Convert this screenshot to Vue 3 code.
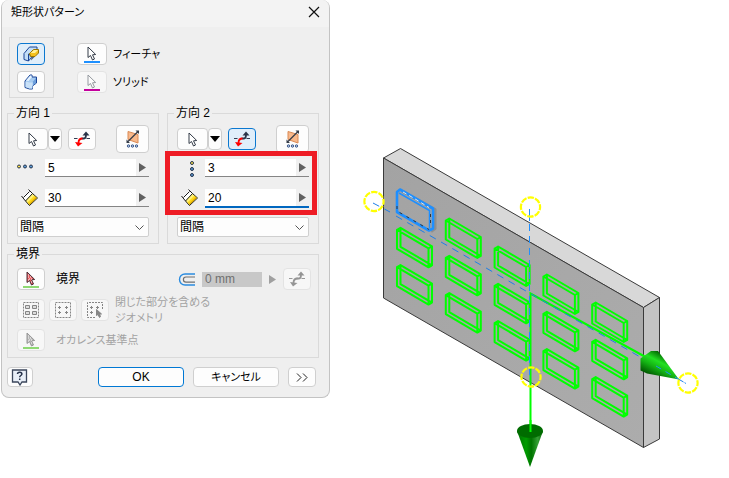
<script setup>
/**
 * 矩形状パターン ダイアログ + モデルビュー
 */
import { reactive, ref } from 'vue'

const target = ref('feature')

const directions = reactive([
  { id: 1, title: '方向 1', count: '5', spacing: '30', mode: '間隔', flipped: false, marked: false },
  { id: 2, title: '方向 2', count: '3', spacing: '20', mode: '間隔', flipped: true, marked: true }
])

const modes = ['間隔', '距離']
const offset = ref('0 mm')

// 左上のセルは元フィーチャなので除く
const pockets = []
for (let row = 0; row < 3; row++) {
  for (let col = 0; col < 5; col++) {
    if (row || col) pockets.push({ x: 397 + col * 48.8, y: 191.5 + col * 28 + row * 37.3 })
  }
}

const handles = [
  { x: 374, y: 201.5 },
  { x: 530.5, y: 207 },
  { x: 531, y: 377 },
  { x: 688, y: 383 }
]
</script>

<template>
  <svg class="defs" aria-hidden="true">
    <symbol id="cursor" viewBox="0 0 10 15">
      <path d="M1 1v10.5l2.5-2 2 4.5 2-1-2-4.2 3.2-.3z" fill="#fff" stroke="#343c48" />
    </symbol>
    <symbol id="cursor-red" viewBox="0 0 10 15">
      <path d="M1 1v10.5l2.5-2 2 4.5 2-1-2-4.2 3.2-.3z" fill="#e8585c" stroke="#4a3038" />
      <path d="M2 4h1M2 6h1M4 6h1M3 8h1M5 8h1M2 9h1M5 11h1" stroke="#fff" />
    </symbol>
    <symbol id="flip" viewBox="0 0 16 16">
      <path d="M0 7.500h3.500M12.500 7.500H16" stroke="#343c50" />
      <path d="M7.500 7.500h2.500c1.500 0 2-1.500 2-4" fill="none" stroke="#2a3448" stroke-width="1.800" />
      <path d="M8.500 4.500L12 .5l3.500 4z" fill="#2a3448" />
      <path d="M8.500 7.500C5.500 7.500 4.500 9 4.500 12" fill="none" stroke="#f00" stroke-width="1.800" />
      <path d="M1 11l3 4.500L8.500 12z" fill="#f00" />
    </symbol>
    <symbol id="midplane" viewBox="0 0 14 18">
      <path d="M2 1.500l10 3v8.500L2 9.500z" fill="#f8b98c" stroke="#d98a55" />
      <path d="M2 11.500L12 1.500" stroke="#343c48" stroke-width="1.200" />
      <path d="M.5 13V9.500L4 13zM13 .5V4L9.500.5z" fill="#343c48" />
      <g fill="#b9d0ee" stroke="#3a5688">
        <circle cx="2.500" cy="16" r="1.200" />
        <circle cx="6.500" cy="16" r="1.200" />
        <circle cx="10.500" cy="16" r="1.200" />
      </g>
    </symbol>
    <symbol id="spacing" viewBox="0 0 18 18">
      <path d="M1.500 8.500l7-7 3 3-7.500 7.500z" fill="#fff" />
      <path d="M4.500 12l7-7.500 5 4.500-8 7.500z" fill="#fff27a" stroke="#1a1a1a" />
      <path d="M6.500 13.500l7-7L15.500 9l-7 6.800z" fill="#ffd91a" />
      <path d="M8 15l7-7 .8 1-7.300 6.800z" fill="#d9a400" />
      <path d="M.5 7l4 5M7.500.5l4 4M2.500 8.500l6-6" fill="none" stroke="#1a1a1a" />
    </symbol>
  </svg>

  <main class="workspace">
    <form class="dialog" @submit.prevent>
      <header class="title-bar">
        <h1>矩形状パターン</h1>
        <button type="button" class="close" aria-label="閉じる">
          <svg width="12" height="12" viewBox="0 0 12 12"><path d="M1 1l10 10M11 1L1 11" stroke="#111" stroke-width="1.200" /></svg>
        </button>
      </header>

      <div class="body">
        <div class="top">
          <div class="kinds">
            <button type="button" class="tool" :class="{ active: target === 'feature' }" aria-label="個別フィーチャ" @click="target = 'feature'">
              <svg width="18" height="18" viewBox="0 0 18 18">
                <path d="M2 8.500L7.500 2h7.500v3L6.500 9.500V16L2 14.500z" fill="#c3def6" stroke="#1b4597" />
                <path d="M6.500 9l3 2v1.500L6.500 16z" fill="#a9cdf0" stroke="#1b4597" />
                <path d="M9.500 11.500h3.500L9 15.500z" fill="#53657e" />
                <path d="M7.500 8.500l4-4h5v3.500l-3.500 3.500H8.500z" fill="#f5c11c" stroke="#9a7400" />
                <path d="M8.500 8l3.500-3h4l-3 3z" fill="#fff19a" />
              </svg>
            </button>
            <button type="button" class="tool" :class="{ active: target === 'solid' }" aria-label="ソリッド全体" @click="target = 'solid'">
              <svg width="18" height="18" viewBox="0 0 18 18">
                <path d="M3 8l5-6h2v2h4.500v6L10.500 13v3H7.500L3 14.500z" fill="#a5caf0" stroke="#1b4597" />
                <path d="M3.500 8.500l4 1h3v6h-3l-4-1.500z" fill="#c9e1f8" />
                <path d="M4 7.500l4.500-5h1v2L6.500 8z" fill="#e6f3ff" />
                <path d="M11 8.500l3-3.500v5l-3 2.500z" fill="#6d9fdb" />
              </svg>
            </button>
          </div>
          <div class="picks">
            <div class="pick">
              <button id="pick-feature" type="button" class="tool pick-button">
                <svg width="10" height="15"><use href="#cursor" /></svg>
                <i class="underline blue"></i>
              </button>
              <label class="kana" for="pick-feature">フィーチャ</label>
            </div>
            <div class="pick">
              <button id="pick-solid" type="button" class="tool pick-button" disabled>
                <svg class="faded" width="10" height="15"><use href="#cursor" /></svg>
                <i class="underline magenta"></i>
              </button>
              <label class="kana" for="pick-solid">ソリッド</label>
            </div>
          </div>
        </div>

        <div class="directions">
          <fieldset v-for="dir in directions" :key="dir.id" class="group">
            <legend>{{ dir.title }}</legend>
            <div class="tools">
              <button type="button" class="tool path" aria-label="パスを選択">
                <svg width="10" height="15"><use href="#cursor" /></svg>
              </button>
              <button type="button" class="tool drop" aria-label="選択オプション">
                <svg width="10" height="6" viewBox="0 0 10 6"><path d="M0 0h10L5 6z" fill="#000" /></svg>
              </button>
              <button type="button" class="tool flip" :class="{ active: dir.flipped }" aria-label="反転" @click="dir.flipped = !dir.flipped">
                <svg width="16" height="16"><use href="#flip" /></svg>
              </button>
              <button type="button" class="tool mid" aria-label="中間面">
                <svg width="14" height="18"><use href="#midplane" /></svg>
              </button>
            </div>

            <div class="fields">
              <div class="field">
                <label :for="'count' + dir.id" aria-label="個数">
                  <svg v-if="dir.id === 1" width="28" height="18" viewBox="0 0 28 18" stroke="#26344c">
                    <circle cx="2" cy="7.500" r="1.500" fill="#ffe34d" />
                    <circle cx="8" cy="7.500" r="1.500" fill="#5b9bd5" />
                    <circle cx="14" cy="7.500" r="1.500" fill="#5b9bd5" />
                  </svg>
                  <svg v-else width="28" height="18" viewBox="0 0 28 18" stroke="#26344c">
                    <circle cx="15" cy="4" r="1.500" fill="#ffe34d" />
                    <circle cx="15" cy="10" r="1.500" fill="#5b9bd5" />
                    <circle cx="15" cy="16" r="1.500" fill="#5b9bd5" />
                  </svg>
                </label>
                <div class="value">
                  <input :id="'count' + dir.id" v-model="dir.count" type="text" />
                  <button type="button" aria-label="個数メニュー">
                    <svg width="7" height="9" viewBox="0 0 7 9"><path d="M0 0l7 4.500L0 9z" fill="#606060" /></svg>
                  </button>
                </div>
              </div>
              <div class="field">
                <label :for="'spacing' + dir.id" aria-label="間隔">
                  <svg class="spacing-icon" width="18" height="18"><use href="#spacing" /></svg>
                </label>
                <div class="value" :class="{ focused: dir.marked }">
                  <input :id="'spacing' + dir.id" v-model="dir.spacing" type="text" />
                  <button type="button" aria-label="間隔メニュー">
                    <svg width="7" height="9" viewBox="0 0 7 9"><path d="M0 0l7 4.500L0 9z" fill="#606060" /></svg>
                  </button>
                </div>
              </div>
              <div v-if="dir.marked" class="marker"></div>
            </div>

            <div class="mode">
              <select v-model="dir.mode" :aria-label="dir.title + ' の種類'">
                <option v-for="mode in modes" :key="mode">{{ mode }}</option>
              </select>
              <svg width="9" height="5" viewBox="0 0 9 5"><path d="M.5.5l4 4 4-4" fill="none" stroke="#555" /></svg>
            </div>
          </fieldset>
        </div>

        <fieldset class="group boundary">
          <legend>境界</legend>
          <div class="line">
            <button id="pick-boundary" type="button" class="tool">
              <svg width="10" height="15"><use href="#cursor-red" /></svg>
              <i class="underline green"></i>
            </button>
            <label for="pick-boundary">境界</label>
            <div class="offset">
              <label for="offset" aria-label="オフセット">
                <svg width="17" height="13" viewBox="0 0 17 13" fill="none">
                  <path d="M17 1H7a5.500 5.500 0 0 0 0 11h10" stroke="#2b8ce0" stroke-width="1.400" />
                  <path d="M17 4H8a2.500 2.500 0 0 0 0 5.200h9" stroke="#707070" stroke-width="1.200" />
                </svg>
              </label>
              <input id="offset" v-model="offset" type="text" disabled />
              <svg width="7" height="9" viewBox="0 0 7 9"><path d="M0 0l7 4.500L0 9z" fill="#a0a0a0" /></svg>
              <button type="button" class="tool" disabled aria-label="オフセットを反転">
                <svg class="gray" width="16" height="16"><use href="#flip" /></svg>
              </button>
            </div>
          </div>
          <div class="line include">
            <button type="button" class="tool" disabled aria-label="ジオメトリ全体">
              <svg width="16" height="16" viewBox="0 0 16 16" fill="none" stroke="#858585">
                <path d="M.5.5h15v15H.5z" stroke-dasharray="2 1" />
                <path d="M2.500 3.500h4v3h-4zM9.500 3.500h4v3h-4zM2.500 9.500h4v3h-4zM9.500 9.500h4v3h-4z" fill="#ddd" />
              </svg>
            </button>
            <button type="button" class="tool" disabled aria-label="図心">
              <svg width="16" height="16" viewBox="0 0 16 16" fill="none" stroke="#858585">
                <path d="M.5.5h15v15H.5z" stroke-dasharray="2 1" />
                <path d="M3 5.500h3M4.500 4v3M10 5.500h3M11.500 4v3M3 10.500h3M4.500 9v3M10 10.500h3M11.500 9v3" />
              </svg>
            </button>
            <button type="button" class="tool" disabled aria-label="基準点">
              <svg width="16" height="16" viewBox="0 0 16 16" fill="none" stroke="#858585">
                <path d="M8 15.500H.5V.5h15V8" stroke-dasharray="2 1" />
                <path d="M3 5.500h3M4.500 4v3M9 5.500h3M10.500 4v3M3 10.500h3M4.500 9v3" />
                <path d="M9.500 7.500v6l1.500-1 1.500 3 1-.8-1-2.700h2z" fill="#858585" />
              </svg>
            </button>
            <span class="kana">閉じた部分を含める<br />ジオメトリ</span>
          </div>
          <div class="line">
            <button id="pick-base" type="button" class="tool" disabled>
              <svg class="gray" width="10" height="15"><use href="#cursor-red" /></svg>
              <i class="underline green"></i>
            </button>
            <label for="pick-base" class="kana dim">オカレンス基準点</label>
          </div>
        </fieldset>

        <footer class="footer">
          <button type="button" class="help" aria-label="ヘルプ">
            <svg width="18" height="17" viewBox="0 0 18 17">
              <path d="M1.500 1h14v12H11l-2 3-2-3H1.500z" fill="#e8eef7" stroke="#3c475c" stroke-width="1.300" />
              <path d="M6.500 5c0-2.400 4.400-2.400 4.400 0 0 1.500-2.200 1.500-2.200 3.200M8.700 9.500v1.500" fill="none" stroke="#26324a" stroke-width="1.500" />
            </svg>
          </button>
          <button type="submit" class="ok">OK</button>
          <button type="button" class="cancel">キャンセル</button>
          <button type="button" class="more" aria-label="詳細">
            <svg width="12" height="9" viewBox="0 0 12 9"><path d="M1 .5l4 4-4 4M7 .5l4 4-4 4" fill="none" stroke="#222" /></svg>
          </button>
        </footer>
      </div>
    </form>

    <svg class="view" viewBox="330 0 399 478" role="img" aria-label="パターンのプレビュー">
      <defs>
        <linearGradient id="face" x1="0" y1="0" x2="1" y2="1">
          <stop offset="0" stop-color="#a3a3a3" />
          <stop offset="1" stop-color="#acacac" />
        </linearGradient>
        <linearGradient id="cone-down">
          <stop offset="0" stop-color="#007000" />
          <stop offset=".35" stop-color="#009c00" />
          <stop offset=".55" stop-color="#007400" />
          <stop offset=".8" stop-color="#35a035" />
          <stop offset="1" stop-color="#006000" />
        </linearGradient>
        <linearGradient id="cone-right" gradientUnits="userSpaceOnUse" x1="664" y1="354" x2="652" y2="377">
          <stop offset="0" stop-color="#006000" />
          <stop offset=".35" stop-color="#22e022" />
          <stop offset=".6" stop-color="#14b414" />
          <stop offset="1" stop-color="#005000" />
        </linearGradient>
      </defs>

      <g stroke="#3a3a3a" stroke-linejoin="round">
        <path d="M383.500 158L400.500 148.500 659.500 297.500 643.500 307.500z" fill="#d8d8d8" />
        <path d="M643.500 307.500l16-10V439l-16 8.500z" fill="#c4c4c4" />
        <path d="M383.500 158l260 149.500v140L383.500 298z" fill="url(#face)" />
      </g>

      <g fill="none" stroke="#00ff00" stroke-width="2" stroke-linejoin="round">
        <path
          v-for="(p, i) in pockets"
          :key="i"
          :transform="`translate(${p.x} ${p.y})`"
          d="M0 1L31.500 19.500V38.500L0 20zM3.500-1L35 17.500V36.500L3.500 18zM0 1l3.500-2M31.500 19.500l3.500-2M31.500 38.500l3.500-2"
        />
      </g>

      <g fill="none" stroke-linejoin="round">
        <path d="M402 191l33 18.500v19l-4 3" stroke="#777" stroke-width="3" opacity=".5" />
        <path d="M397 192l3-2.500 33 19v20l-4 2L397 212z" stroke="#1e8fff" stroke-width="2.600" />
        <path d="M397 206v5l32 18.500" stroke="#333" stroke-dasharray="3 5" />
        <path d="M403 192l13 7.500 13 8" stroke="#e2e6ea" stroke-dasharray="4 3" />
        <path d="M399 193l30.500 17.500v18" stroke="#1e8fff" stroke-width="1.500" />
        <path d="M430.500 214v12" stroke="#333" stroke-dasharray="3 3" />
      </g>

      <g fill="none">
        <path d="M660 365L530.500 293.500V432" stroke="#00ff00" stroke-width="2" />
        <path d="M373 203l17 9M396 216l291 168" stroke="#1e7fe8" stroke-dasharray="7 6" />
        <path d="M529.500 209v12" stroke="#1e8fff" />
        <path d="M529.500 224v153" stroke="#1e8fff" stroke-dasharray="7 5" />
      </g>

      <path d="M651 351h7l21 28.500-32-6-6.500-3v-12z" fill="url(#cone-right)" />
      <path d="M656 366l30 17.500" stroke="#1e8fff" stroke-dasharray="6 5" />
      <path d="M517 431l13 36 13-36z" fill="url(#cone-down)" />
      <ellipse cx="530" cy="431" rx="13" ry="7" fill="#006c00" />
      <path d="M530.500 420v12" stroke="#00ff00" stroke-width="2" />

      <circle
        v-for="(h, i) in handles"
        :key="'h' + i"
        :cx="h.x"
        :cy="h.y"
        r="9.600"
        fill="none"
        stroke="#ffff00"
        stroke-width="2.200"
        stroke-dasharray="6.340 1.200"
        stroke-dashoffset="3.170"
      />
    </svg>
  </main>
</template>

<style>
body {
  background: #fff;
}
</style>

<style scoped>
.defs {
  position: absolute;
  width: 0;
  height: 0;
}

.workspace {
  display: flex;
  align-items: flex-start;
  font-family: "Liberation Sans", "Noto Sans CJK JP", sans-serif;
  font-size: 12px;
  font-feature-settings: "palt";
  line-height: 14px;
  color: #000;
}

.dialog {
  box-sizing: border-box;
  flex: 0 0 329px;
  margin-left: 1px;
  border: 1px solid #c3c3c3;
  border-top: 0;
  border-radius: 8px;
  background: #efefef;
  overflow: hidden;
}

.view {
  flex: 1;
  min-width: 0;
}

.title-bar {
  display: flex;
  align-items: center;
  justify-content: space-between;
  padding: 5px 8px 8px 9px;
  background: #f3f3f3;
}

h1 {
  margin: 0;
  font-size: 11px;
  font-weight: 400;
}

button,
input,
select {
  box-sizing: border-box;
  margin: 0;
  padding: 0;
  font: inherit;
  font-feature-settings: inherit;
  color: inherit;
}

button {
  display: flex;
  align-items: center;
  justify-content: center;
  border: 1px solid #cfcfcf;
  border-radius: 4px;
  background: #fdfdfd;
}

.close {
  width: 14px;
  height: 14px;
  border: 0;
  background: none;
}

.body {
  padding: 10px 10px 10px 5px;
}

.top {
  display: flex;
  gap: 23px;
  padding-left: 2px;
}

.kinds {
  display: flex;
  flex-direction: column;
  gap: 6px;
  padding: 5px 8px 4px 7px;
  border: 1px solid #dadada;
}

.picks {
  display: flex;
  flex-direction: column;
  gap: 6px;
  padding-top: 6px;
}

.pick {
  display: flex;
  align-items: center;
  gap: 6px;
}

.kana {
  font-size: 11px;
}

.tool {
  flex: none;
  flex-direction: column;
  width: 28px;
  height: 22px;
}

.tool.pick-button {
  width: 30px;
}

.tool.active {
  border-color: #0b78d0;
  background: #e0eefa;
}

.tool:disabled {
  border-color: #e3e3e3;
  background: #f7f7f7;
}

.underline {
  width: 16px;
  height: 2px;
}

.blue {
  background: #1e90ff;
}

.magenta {
  background: #c4009c;
}

.green {
  background: #8ed973;
}

.faded {
  opacity: 0.5;
}

.gray {
  filter: grayscale(1);
  opacity: 0.5;
}

.directions {
  display: grid;
  grid-template-columns: 1fr 1fr;
  gap: 8px;
  margin-top: 8px;
}

.group {
  min-width: 0;
  margin: 0;
  padding: 5px 9px 6px;
  border: 1px solid #dadada;
}

legend {
  padding: 0 2px;
  margin-left: -3px;
}

.tools {
  display: flex;
  align-items: center;
}

.tool.path {
  width: 31px;
}

.tool.drop {
  width: 14px;
}

.tool.flip {
  margin-left: 6px;
}

.tool.mid {
  width: 33px;
  height: 28px;
  margin-left: auto;
}

.fields {
  position: relative;
  display: flex;
  flex-direction: column;
  gap: 12px;
  margin: 6px 0 10px;
}

.marker {
  position: absolute;
  inset: -8px -8px -8px -12px;
  border: 5px solid #ee1c25;
  pointer-events: none;
}

.field {
  display: flex;
  height: 18px;
}

.field label {
  flex: none;
  width: 28px;
}

.spacing-icon {
  margin-left: 4px;
}

.value {
  display: flex;
  flex: 1;
  min-width: 0;
  border-bottom: 1px solid #858585;
}

.value.focused {
  border-color: #0067c0;
  box-shadow: 0 1px #0067c0;
}

.value input {
  flex: 1;
  min-width: 0;
  padding-left: 3px;
  border: 0;
  background: #fff;
  outline: none;
}

.value button {
  width: 13px;
  border: 0;
  border-radius: 0;
  background: #f0f0f0;
}

.mode {
  position: relative;
}

.mode select {
  display: block;
  width: 100%;
  height: 20px;
  padding-left: 2px;
  border: 1px solid #cfcfcf;
  border-radius: 2px;
  background: #fdfdfd;
  appearance: none;
}

.mode svg {
  position: absolute;
  top: 8px;
  right: 5px;
  pointer-events: none;
}

.boundary {
  margin-top: 3px;
}

.line {
  display: flex;
  align-items: center;
  gap: 11px;
  min-height: 22px;
}

.boundary > .line:first-of-type {
  margin-top: 2px;
}

.include {
  gap: 4px;
  margin: 4px 0 3px;
  line-height: 16px;
  color: #a3a3a3;
}

.include span {
  margin-left: 2px;
}

.dim {
  color: #a3a3a3;
}

.offset {
  display: flex;
  align-items: center;
  gap: 7px;
  margin-left: auto;
}

.offset label,
.field label {
  display: flex;
}

.offset input {
  width: 60px;
  height: 15px;
  padding-left: 3px;
  border: 0;
  background: #c8c8c8;
  color: #707070;
}

.offset .tool {
  margin-right: -2px;
}

.footer {
  display: flex;
  align-items: center;
  gap: 9px;
  margin-top: 9px;
}

.footer button {
  height: 20px;
}

.footer .help {
  width: 26px;
  margin-right: auto;
}

.footer .ok,
.footer .cancel {
  width: 86px;
}

.footer .ok {
  border-color: #0078d4;
}

.footer .cancel {
  font-size: 11px;
}

.footer .more {
  width: 28px;
  margin-right: 3px;
}
</style>
